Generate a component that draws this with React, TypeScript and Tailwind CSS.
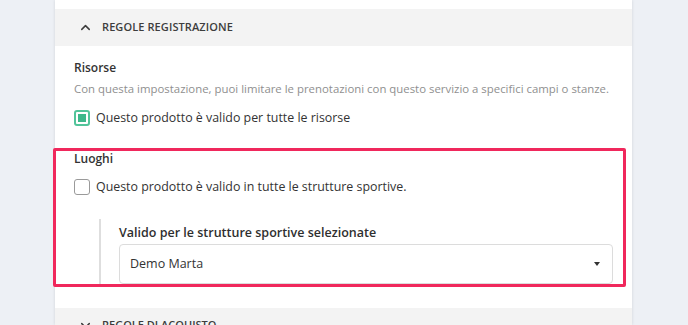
import { ChevronUp } from 'lucide-react';

const font = { fontFamily: '"Open Sans", "Noto Sans", sans-serif' };

function SectionHeader({ title, open }: { title: string; open?: boolean }) {
  return (
    <div className="h-[37px] bg-[#f3f3f3] flex items-center pl-[23px] gap-[9px] text-[#3d3d3d]">
      <ChevronUp size={15} strokeWidth={2.4} className={open ? '' : 'rotate-180'} />
      <span className="text-[11px] font-semibold uppercase tracking-[0.1px]">{title}</span>
    </div>
  );
}

function Checkbox({ checked }: { checked?: boolean }) {
  return checked ? (
    <span className="w-4 h-4 rounded-[3px] border-2 border-[#52c49a] flex items-center justify-center shrink-0">
      <span className="w-2 h-2 bg-[#3db88b]" />
    </span>
  ) : (
    <span className="w-4 h-4 rounded-[3px] border border-[#9a9a9a] bg-white shrink-0" />
  );
}

export default function App() {
  return (
    <div className="relative w-full h-[325px] bg-[#edf0f5] overflow-hidden" style={font}>
      <div className="ml-[55px] w-[577px] h-full bg-white shadow-[0_0_3px_rgba(0,0,0,0.12)] pt-[9px] flex flex-col">
        <SectionHeader title="Regole registrazione" open />

        <div className="px-[19px] pt-[12px] text-[#333]">
          <div className="text-[12px] font-semibold leading-[20px]">Risorse</div>
          <div className="text-[11.4px] leading-[18px] text-[#8f8f8f] mt-[2px] whitespace-nowrap">
            Con questa impostazione, puoi limitare le prenotazioni con questo servizio a specifici campi o stanze.
          </div>
          <label className="flex items-center gap-[6px] mt-[10px] h-[20px] text-[12.4px]">
            <Checkbox checked />
            Questo prodotto è valido per tutte le risorse
          </label>

          <div className="text-[12px] font-semibold leading-[20px] mt-[21px]">Luoghi</div>
          <label className="flex items-center gap-[6px] mt-[8px] h-[20px] text-[12.4px]">
            <Checkbox />
            Questo prodotto è valido in tutte le strutture sportive.
          </label>

          <div className="ml-[25px] mt-[22px] border-l-2 border-[#dedede] pl-[18px] pt-[5px] pb-[2px]">
            <div className="text-[12.5px] font-semibold leading-[18px] text-[#2f2f2f]">
              Valido per le strutture sportive selezionate
            </div>
            <div className="mt-[2px] h-[40px] border border-[#dcdcdc] rounded-[4px] flex items-center justify-between pl-[10px] pr-[12px] text-[12.5px]">
              <span>Demo Marta</span>
              <span className="w-0 h-0 border-l-[3.5px] border-r-[3.5px] border-t-[4px] border-l-transparent border-r-transparent border-t-[#333]" />
            </div>
          </div>
        </div>

        <div className="mt-auto">
          <div className="h-[17px] bg-[#f3f3f3] flex items-end pl-[23px] gap-[9px] text-[#3d3d3d] overflow-hidden">
            <ChevronUp size={15} strokeWidth={2.4} className="rotate-180 translate-y-[8px]" />
            <span className="text-[11px] font-semibold uppercase translate-y-[8px]">Regole di acquisto</span>
          </div>
        </div>
      </div>

      {/* highlight annotation */}
      <div className="absolute left-[53px] top-[148px] w-[573px] h-[139px] border-[3px] border-[#f0285c] rounded-[2px] pointer-events-none" />
    </div>
  );
}
